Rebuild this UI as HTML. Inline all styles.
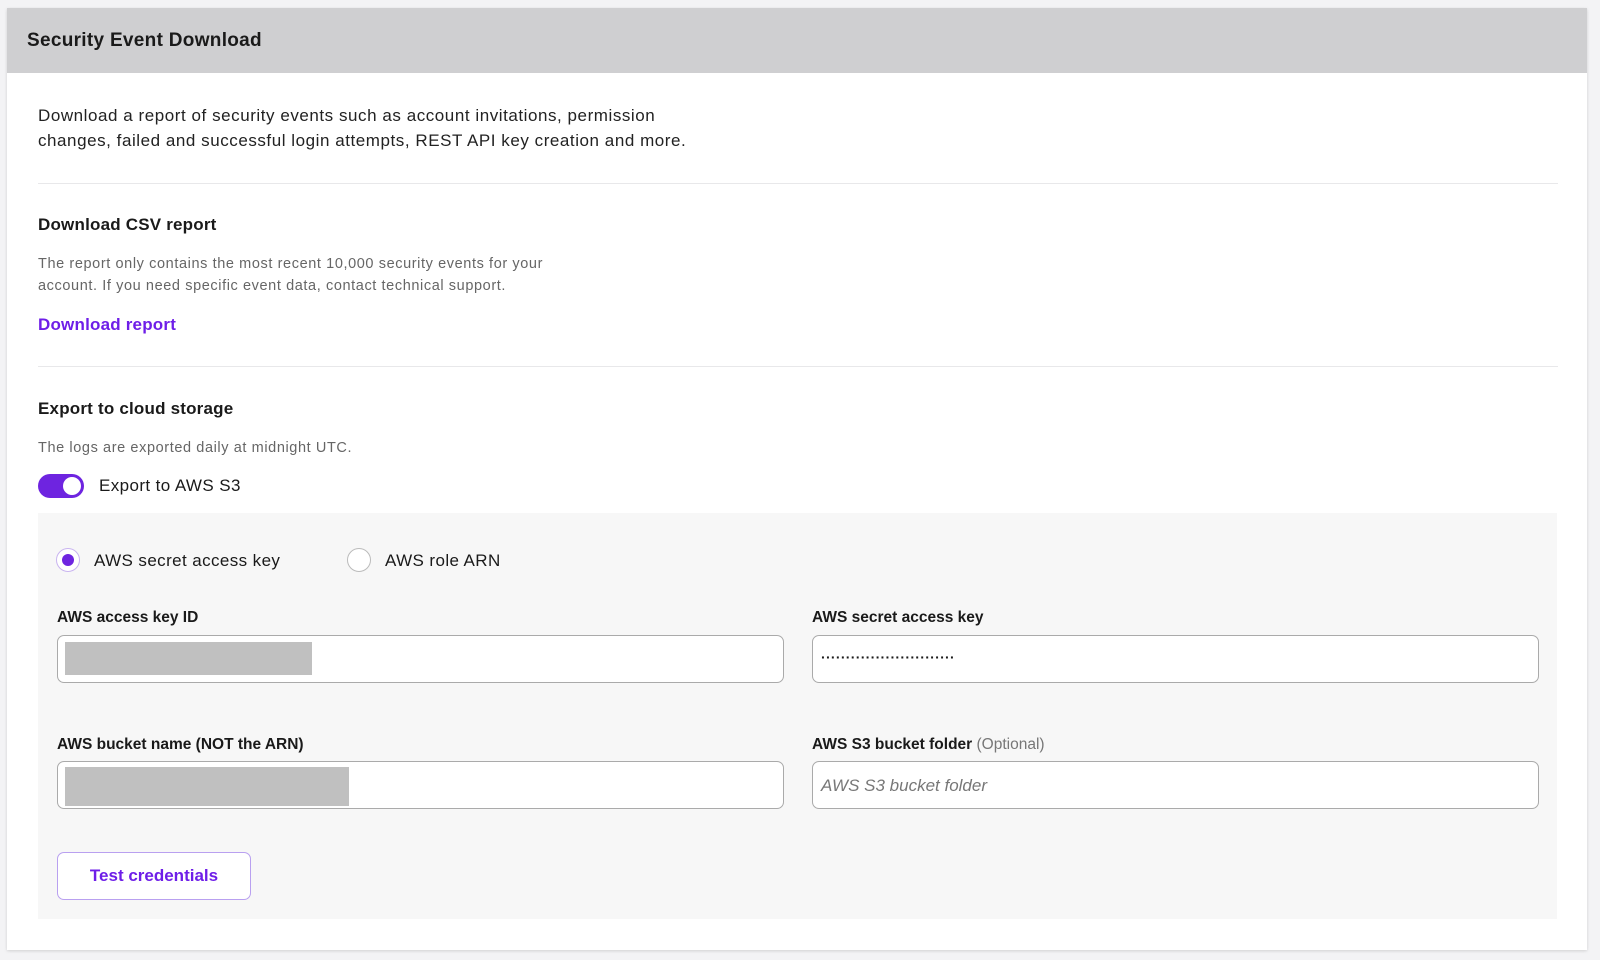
<!DOCTYPE html>
<html><head><meta charset="utf-8"><style>
*{box-sizing:border-box;margin:0;padding:0}
body{width:1600px;height:960px;background:#f3f3f5;font-family:"Liberation Sans",sans-serif;color:#1a1a1a;position:relative;overflow:hidden}
.card{position:absolute;left:7px;top:8px;width:1580px;height:942px;background:#fff;box-shadow:0 1px 3px rgba(0,0,0,.15)}
.hdr{position:absolute;left:0;top:0;width:100%;height:65px;background:#cfcfd1}
.a{position:absolute;white-space:nowrap}
.t{font-weight:bold;font-size:19px;left:20px;top:22px;letter-spacing:0.3px}
.p{font-size:17px;line-height:25px;color:#222;letter-spacing:0.55px}
.h{font-weight:bold;font-size:17px;letter-spacing:0.2px}
.s{font-size:14.5px;line-height:22px;color:#666;letter-spacing:0.6px}
.hr{position:absolute;left:31px;width:1520px;height:1px;background:#e8e8ea}
.panel{position:absolute;left:31px;top:505px;width:1519px;height:406px;background:#f7f7f7}
.inp{position:absolute;height:48px;border:1px solid #aaa;border-radius:7px;background:#fff}
.lbl{font-weight:bold;font-size:15.5px}
.blk{position:absolute;background:#c0c0c0}
</style></head><body>
<div class="card">
<div class="hdr"></div>
<div class="a t">Security Event Download</div>
<div class="a p" style="left:31px;top:95px">Download a report of security events such as account invitations, permission<br>changes, failed and successful login attempts, REST API key creation and more.</div>
<div class="hr" style="top:175px"></div>
<div class="a h" style="left:31px;top:207px">Download CSV report</div>
<div class="a s" style="left:31px;top:245px">The report only contains the most recent 10,000 security events for your<br>account. If you need specific event data, contact technical support.</div>
<div class="a h" style="left:31px;top:307px;color:#6e1ee8">Download report</div>
<div class="hr" style="top:358px"></div>
<div class="a h" style="left:31px;top:391px">Export to cloud storage</div>
<div class="a s" style="left:31px;top:429px">The logs are exported daily at midnight UTC.</div>
<div class="a" style="left:31px;top:466px;width:46px;height:24px;border-radius:12px;background:#6e24e0"><div style="position:absolute;right:3px;top:3px;width:18px;height:18px;border-radius:50%;background:#fff"></div></div>
<div class="a" style="left:92px;top:468px;font-size:17px;letter-spacing:0.4px">Export to AWS S3</div>
<div class="panel">
<div class="a" style="left:18px;top:35px;width:24px;height:24px;border-radius:50%;border:1px solid #c9b4f0;background:#fff"><div style="position:absolute;left:5px;top:5px;width:12px;height:12px;border-radius:50%;background:#6e24e0"></div></div>
<div class="a" style="left:56px;top:38px;font-size:17px;letter-spacing:0.4px">AWS secret access key</div>
<div class="a" style="left:309px;top:35px;width:24px;height:24px;border-radius:50%;border:1px solid #bbb;background:#fff"></div>
<div class="a" style="left:347px;top:38px;font-size:17px;letter-spacing:0.4px">AWS role ARN</div>
<div class="a lbl" style="left:19px;top:96px">AWS access key ID</div>
<div class="inp" style="left:19px;top:122px;width:727px"><div class="blk" style="left:7px;top:6px;width:247px;height:33px"></div></div>
<div class="a lbl" style="left:774px;top:96px">AWS secret access key</div>
<div class="inp" style="left:774px;top:122px;width:727px"><div class="a" style="left:8px;top:13px;font-size:14px;letter-spacing:0.3px;font-weight:bold">···························</div></div>
<div class="a lbl" style="left:19px;top:223px">AWS bucket name (NOT the ARN)</div>
<div class="inp" style="left:19px;top:248px;width:727px"><div class="blk" style="left:7px;top:5px;width:284px;height:39px"></div></div>
<div class="a lbl" style="left:774px;top:223px">AWS S3 bucket folder <span style="font-weight:normal;color:#777">(Optional)</span></div>
<div class="inp" style="left:774px;top:248px;width:727px"><div class="a" style="left:8px;top:14px;font-size:17px;font-style:italic;color:#777">AWS S3 bucket folder</div></div>
<div class="a" style="left:19px;top:339px;width:194px;height:48px;border:1px solid #b9a0f0;border-radius:7px;background:#fff;color:#6e1ee8;font-weight:bold;font-size:17px;text-align:center;line-height:46px">Test credentials</div>
</div>
</div>
</body></html>
